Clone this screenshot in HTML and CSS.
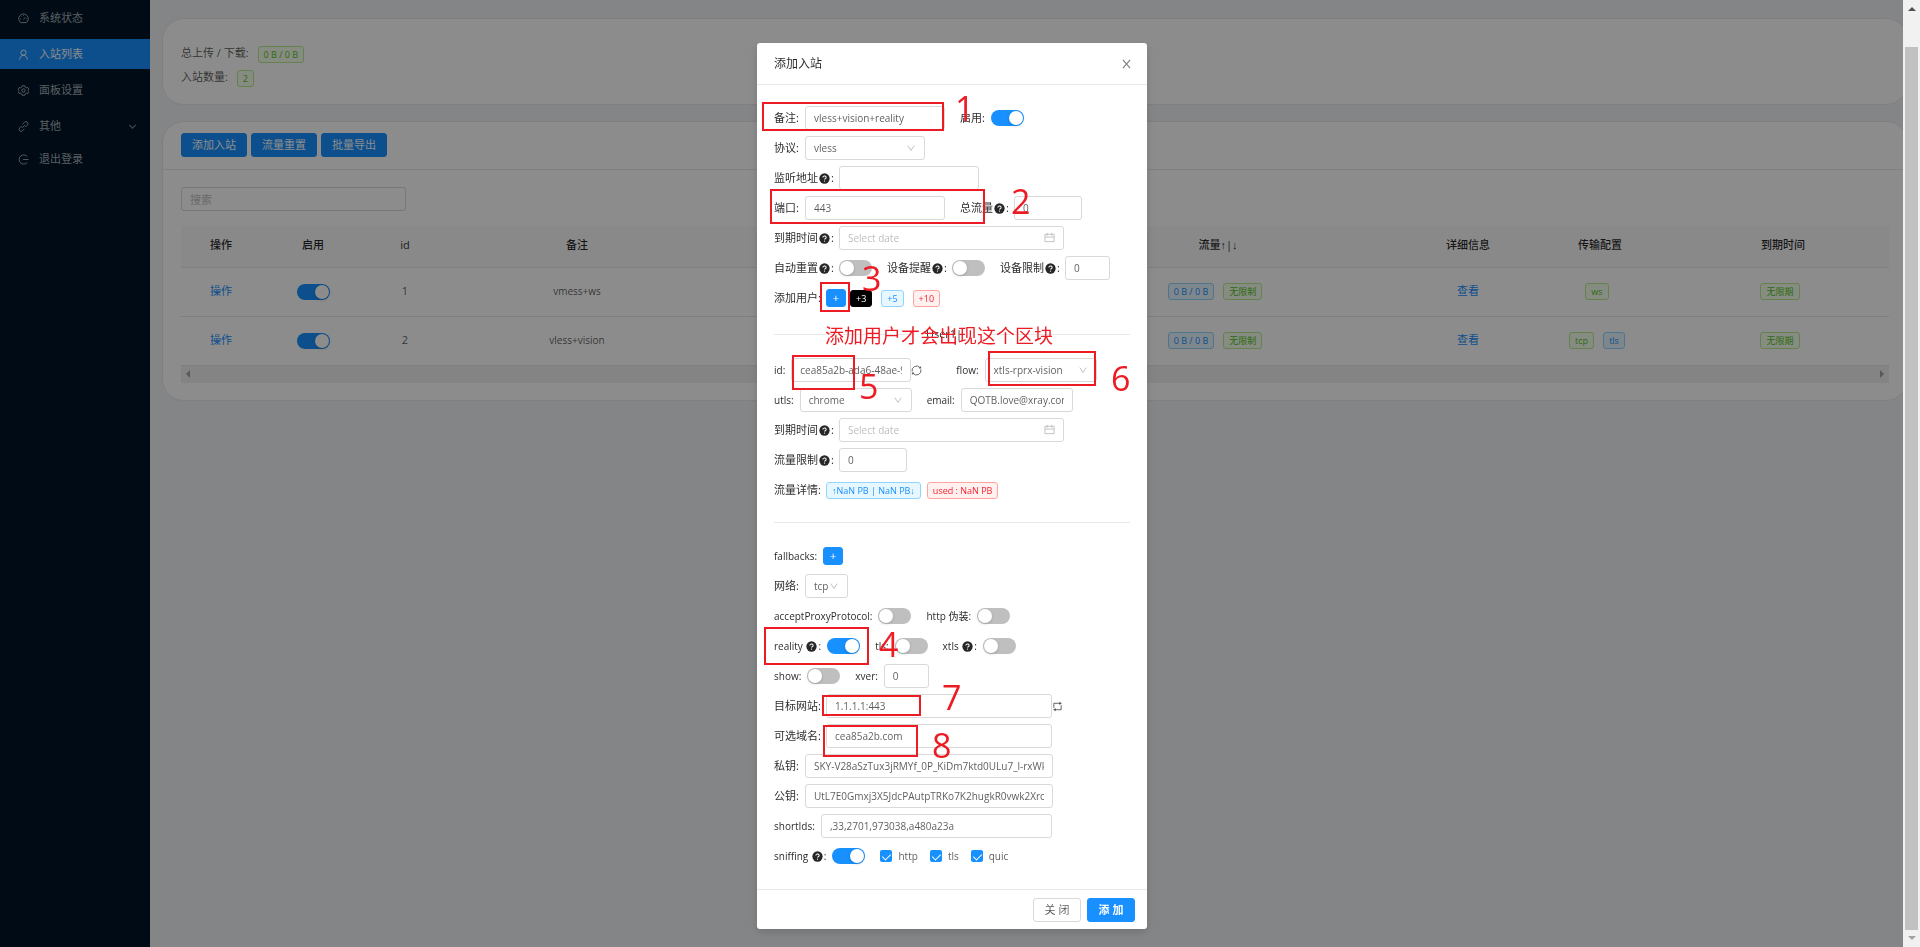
FILE: index.html
```html
<!DOCTYPE html>
<html lang="zh-CN">
<head>
    <meta charset="UTF-8">
    <meta name="viewport" content="width=device-width, initial-scale=1.0">
    <title>入站列表</title>
    <link rel="stylesheet" href="styles.css">
</head>
<body>
    <svg class="sprite" aria-hidden="true">
        <symbol id="i-down" viewBox="0 0 10 10"><path d="M1 2 5 8 9 2" fill="none" stroke="currentColor" stroke-width="1.200"/></symbol>
        <symbol id="i-help" viewBox="0 0 12 12">
            <circle cx="6" cy="6" r="5.6" fill="currentColor"/>
            <path d="M4.2 4.8a1.8 1.6 0 1 1 2.6 1.4Q6 6.5 6 7.2" fill="none" stroke="#fff" stroke-width="1.1"/>
            <circle cx="6" cy="8.8" r=".7" fill="#fff"/>
        </symbol>
        <symbol id="i-calendar" viewBox="0 0 12 12"><path d="M1 2.5h10v8H1zM1 5.5h10M3.5 1v3M8.5 1v3" fill="none" stroke="currentColor"/></symbol>
    </svg>

    <div class="layout">
        <nav class="sidebar">
            <a class="menu-item" href="#">
                <svg viewBox="0 0 12 12"><path d="M3 10.5a5.2 5.2 0 1 1 6 0zM6 7l2-2.4M2.4 6.5h.8M6 2.2v.9M8.8 6.5h.8M3.4 3.6l.6.6"/></svg>系统状态</a>
            <a class="menu-item active" href="#">
                <svg viewBox="0 0 12 12"><circle cx="6" cy="4" r="2.8"/><path d="M1.8 11.5C2 8.6 3.6 7 6 7s4 1.6 4.2 4.5"/></svg>入站列表</a>
            <a class="menu-item" href="#">
                <svg viewBox="0 0 12 12"><circle cx="6" cy="6" r="1.8"/><path d="M4.7.8h2.6l.5 1.5 1.5.8 1.500-.3L12 5 10.900 6 12 7.200l-1.200 2-1.500-.3-1.500.8-.5 1.500H4.700l-.5-1.500-1.500-.8-1.500.3L0 7.200 1.100 6 0 5l1.200-2.200 1.500.3 1.500-.8z"/></svg>面板设置</a>
            <a class="menu-item submenu" href="#">
                <svg viewBox="0 0 12 12"><path d="M5 3.500 7.200 1.300a2 2 0 0 1 3 3L7.800 6.800M7 8.500l-2.200 2.200a2 2 0 0 1-3-3L4.200 5.200M4.500 7.500l3-3"/></svg>其他
                <svg class="menu-arrow" viewBox="0 0 10 10"><path d="M2 3.500 5 6.500 8 3.500"/></svg></a>
            <a class="menu-item" href="#">
                <svg viewBox="0 0 12 12"><path d="M10 9.300A5 5 0 1 1 10 2.700M5.500 6h6"/></svg>退出登录</a>
        </nav>

        <main class="content">
            <section class="card summary">
                <p>总上传 / 下载: <span class="tag green">0 B / 0 B</span></p>
                <p>入站数量: <span class="tag green">2</span></p>
            </section>

            <section class="card">
                <div class="card-head">
                    <button class="btn primary">添加入站</button>
                    <button class="btn primary">流量重置</button>
                    <button class="btn primary">批量导出</button>
                </div>
                <div class="card-body">
                    <input class="input search" type="text" placeholder="搜索" aria-label="搜索">
                    <table class="inbounds">
                        <colgroup>
                            <col class="c-action"><col class="c-enable"><col class="c-id"><col class="c-remark"><col class="c-port">
                            <col class="c-traffic"><col class="c-detail"><col class="c-stream"><col class="c-expiry">
                        </colgroup>
                        <thead>
                            <tr><th>操作</th><th>启用</th><th>id</th><th>备注</th><th></th><th>流量↑|↓</th><th>详细信息</th><th>传输配置</th><th>到期时间</th></tr>
                        </thead>
                        <tbody>
                            <tr>
                                <td><a href="#">操作</a></td>
                                <td><input class="switch" type="checkbox" role="switch" aria-label="启用 1" checked></td>
                                <td>1</td>
                                <td class="en">vmess+ws</td>
                                <td></td>
                                <td><span class="tag blue">0 B / 0 B</span><span class="tag green">无限制</span></td>
                                <td><a href="#">查看</a></td>
                                <td><span class="tag green">ws</span></td>
                                <td><span class="tag green">无限期</span></td>
                            </tr>
                            <tr>
                                <td><a href="#">操作</a></td>
                                <td><input class="switch" type="checkbox" role="switch" aria-label="启用 2" checked></td>
                                <td>2</td>
                                <td class="en">vless+vision</td>
                                <td></td>
                                <td><span class="tag blue">0 B / 0 B</span><span class="tag green">无限制</span></td>
                                <td><a href="#">查看</a></td>
                                <td><span class="tag green">tcp</span><span class="tag blue">tls</span></td>
                                <td><span class="tag green">无限期</span></td>
                            </tr>
                        </tbody>
                    </table>
                    <div class="hscroll"><i class="tri left"></i><i class="tri right"></i></div>
                </div>
            </section>
        </main>
    </div>

    <div class="mask"></div>

    <div class="modal-wrap">
        <form class="modal" role="dialog" aria-labelledby="modal-title">
            <header class="modal-head">
                <h2 id="modal-title">添加入站</h2>
                <button class="close" type="button" aria-label="Close">
                    <svg viewBox="0 0 10 10"><path d="M1 .5 9 9.5M9 .5 1 9.5"/></svg>
                </button>
            </header>

            <div class="modal-body">
                <div class="row">
                    <div class="item"><label class="l2" for="remark">备注:</label><input class="input w140" id="remark" type="text" value="vless+vision+reality"></div>
                    <div class="item"><label class="l2" for="enable">启用:</label><input class="switch" id="enable" type="checkbox" role="switch" checked></div>
                </div>
                <div class="row">
                    <div class="item"><label class="l2" for="protocol">协议:</label><span class="select w120"><select id="protocol"><option>vless</option></select><svg><use href="#i-down"/></svg></span></div>
                </div>
                <div class="row">
                    <div class="item"><label class="l4h" for="listen">监听地址<svg class="help"><use href="#i-help"/></svg>:</label><input class="input w140" id="listen" type="text"></div>
                </div>
                <div class="row">
                    <div class="item"><label class="l2" for="port">端口:</label><input class="input w140" id="port" type="text" value="443"></div>
                    <div class="item"><label class="l3h" for="total">总流量<svg class="help"><use href="#i-help"/></svg>:</label><input class="input w68" id="total" type="text" value="0"></div>
                </div>
                <div class="row">
                    <div class="item"><label class="l4h" for="expiry">到期时间<svg class="help"><use href="#i-help"/></svg>:</label><span class="date"><input class="input" id="expiry" type="text" placeholder="Select date"><svg><use href="#i-calendar"/></svg></span></div>
                </div>
                <div class="row">
                    <div class="item"><label class="l4h" for="reset">自动重置<svg class="help"><use href="#i-help"/></svg>:</label><input class="switch" id="reset" type="checkbox" role="switch"></div>
                    <div class="item"><label class="l4h" for="alert">设备提醒<svg class="help"><use href="#i-help"/></svg>:</label><input class="switch" id="alert" type="checkbox" role="switch"></div>
                    <div class="item"><label class="l4h" for="limit">设备限制<svg class="help"><use href="#i-help"/></svg>:</label><input class="input w45" id="limit" type="text" value="0"></div>
                </div>
                <div class="row">
                    <div class="item add-user"><span class="label l4">添加用户:</span><button class="btn primary plus" type="button">+</button><span class="tag black">+3</span><span class="tag blue">+5</span><span class="tag red">+10</span></div>
                </div>

                <div class="divider titled"><span>User1|</span></div>

                <div class="row">
                    <div class="item"><label class="en" for="uid">id:</label><input class="input w120" id="uid" type="text" value="cea85a2b-ada6-48ae-9d1f-27c4"><svg class="reload" viewBox="0 0 12 12"><path d="M1.200 7.200A5 5 0 0 1 9.800 2.800M10.800 4.800A5 5 0 0 1 2.200 9.200"/><path class="solid" d="M11 1.200v2.600H8.400zM1 10.800V8.200h2.600z"/></svg></div>
                    <div class="item flow"><label class="en" for="flow">flow:</label><span class="select w112"><select id="flow"><option>xtls-rprx-vision</option></select><svg><use href="#i-down"/></svg></span></div>
                </div>
                <div class="row">
                    <div class="item"><label class="en" for="utls">utls:</label><span class="select w112"><select id="utls"><option>chrome</option></select><svg><use href="#i-down"/></svg></span></div>
                    <div class="item"><label class="en" for="email">email:</label><input class="input w112" id="email" type="text" value="QOTB.love@xray.com"></div>
                </div>
                <div class="row">
                    <div class="item"><label class="l4h" for="uexpiry">到期时间<svg class="help"><use href="#i-help"/></svg>:</label><span class="date"><input class="input" id="uexpiry" type="text" placeholder="Select date"><svg><use href="#i-calendar"/></svg></span></div>
                </div>
                <div class="row">
                    <div class="item"><label class="l4h" for="quota">流量限制<svg class="help"><use href="#i-help"/></svg>:</label><input class="input w68" id="quota" type="text" value="0"></div>
                </div>
                <div class="row">
                    <div class="item"><span class="label l4">流量详情:</span><span class="tag blue">↑NaN PB | NaN PB↓</span><span class="tag red">used : NaN PB</span></div>
                </div>

                <div class="divider"></div>

                <div class="row">
                    <div class="item"><span class="label en">fallbacks:</span><button class="btn primary plus" type="button">+</button></div>
                </div>
                <div class="row">
                    <div class="item"><label class="l2" for="network">网络:</label><span class="select narrow"><select id="network"><option>tcp</option></select><svg><use href="#i-down"/></svg></span></div>
                </div>
                <div class="row">
                    <div class="item"><label class="en" for="proxy">acceptProxyProtocol:</label><input class="switch" id="proxy" type="checkbox" role="switch"></div>
                    <div class="item"><label class="en" for="fake">http 伪装:</label><input class="switch" id="fake" type="checkbox" role="switch"></div>
                </div>
                <div class="row">
                    <div class="item"><label class="en" for="reality">reality <svg class="help"><use href="#i-help"/></svg>:</label><input class="switch" id="reality" type="checkbox" role="switch" checked></div>
                    <div class="item"><label class="en" for="tls">tls:</label><input class="switch" id="tls" type="checkbox" role="switch"></div>
                    <div class="item"><label class="en" for="xtls">xtls <svg class="help"><use href="#i-help"/></svg>:</label><input class="switch" id="xtls" type="checkbox" role="switch"></div>
                </div>
                <div class="row">
                    <div class="item"><label class="en" for="show">show:</label><input class="switch" id="show" type="checkbox" role="switch"></div>
                    <div class="item"><label class="en" for="xver">xver:</label><input class="input w45" id="xver" type="text" value="0"></div>
                </div>
                <div class="row">
                    <div class="item"><label class="l4" for="dest">目标网站:</label><input class="input w226" id="dest" type="text" value="1.1.1.1:443"><svg class="retweet" viewBox="0 0 12 12"><path d="M2 7.500V2.500h6.500M10 4.500v5H3.500"/><path class="solid" d="M8 .7 10.800 2.500 8 4.300zM4 7.700 1.200 9.500 4 11.300z"/></svg></div>
                </div>
                <div class="row">
                    <div class="item"><label class="l4" for="names">可选域名:</label><input class="input w226" id="names" type="text" value="cea85a2b.com"></div>
                </div>
                <div class="row">
                    <div class="item"><label class="l2" for="private">私钥:</label><input class="input w248" id="private" type="text" value="SKY-V28aSzTux3jRMYf_0P_KiDm7ktd0ULu7_l-rxWk"></div>
                </div>
                <div class="row">
                    <div class="item"><label class="l2" for="public">公钥:</label><input class="input w248" id="public" type="text" value="UtL7E0Gmxj3X5JdcPAutpTRKo7K2hugkR0vwk2Xrcw"></div>
                </div>
                <div class="row">
                    <div class="item"><label class="en" for="short">shortIds:</label><input class="input w231" id="short" type="text" value=",33,2701,973038,a480a23a"></div>
                </div>
                <div class="row">
                    <div class="item"><label class="en" for="sniffing">sniffing <svg class="help"><use href="#i-help"/></svg>:</label><input class="switch" id="sniffing" type="checkbox" role="switch" checked></div>
                    <div class="item checks">
                        <label><input class="check" type="checkbox" checked>http</label>
                        <label><input class="check" type="checkbox" checked>tls</label>
                        <label><input class="check" type="checkbox" checked>quic</label>
                    </div>
                </div>
            </div>

            <footer class="modal-foot">
                <button class="btn" type="button">关 闭</button>
                <button class="btn primary strong" type="button">添 加</button>
            </footer>

            <!-- numbered steps drawn over the form -->
            <div class="steps">
                <i class="box box1"></i><b class="num num1">1</b>
                <i class="box box2"></i><b class="num num2">2</b>
                <i class="box box3"></i><b class="num num3">3</b>
                <i class="box box4"></i><b class="num num4">4</b>
                <i class="box box5"></i><b class="num num5">5</b>
                <i class="box box6"></i><b class="num num6">6</b>
                <i class="box box7"></i><b class="num num7">7</b>
                <i class="box box8"></i><b class="num num8">8</b>
                <b class="note">添加用户才会出现这个区块</b>
            </div>
        </form>
    </div>

    <div class="vscroll"><i class="tri up"></i><i class="thumb"></i><i class="tri down"></i></div>
</body>
</html>
```
FILE: styles.css
```css
* {
    box-sizing: border-box;
}

body {
    margin: 0;
    background: #f0f2f5;
    color: rgba(0, 0, 0, 0.65);
    font: 11px/18px "Open Sans", "Liberation Sans", "Noto Sans CJK SC", sans-serif;
    overflow: hidden;
}

button, input, select {
    font: inherit;
    color: inherit;
}

a {
    color: #1890ff;
    text-decoration: none;
}

svg {
    fill: none;
    stroke: currentColor;
    flex: none;
}

.sprite {
    display: none;
}

.solid {
    fill: currentColor;
    stroke: none;
}

.en {
    font-size: 10px;
}

/* page */
.layout {
    display: flex;
    min-height: 100vh;
}

.sidebar {
    width: 150px;
    flex: none;
    padding-top: 3px;
    background: #001529;
}

.menu-item {
    display: flex;
    align-items: center;
    height: 30px;
    margin-bottom: 6px;
    padding: 0 12px 0 18px;
    color: rgba(255, 255, 255, 0.65);
}

.menu-item svg {
    width: 11px;
    height: 11px;
    margin-right: 10px;
}

.menu-item.active {
    background: #1890ff;
    color: #fff;
}

.menu-item.submenu {
    margin-bottom: 3px;
}

.menu-item .menu-arrow {
    margin: 0 0 0 auto;
    opacity: 0.7;
}

.content {
    flex: 1;
    min-width: 0;
    padding: 18px 12px;
}

.card {
    margin-bottom: 16px;
    background: #fff;
    border: 1px solid #e8e8e8;
    border-radius: 22px;
    overflow: hidden;
}

.summary {
    padding: 22px 18px 15px;
}

.summary p {
    margin: 0;
    height: 24px;
    line-height: 24px;
}

.summary .tag {
    margin-left: 6px;
}

.card-head {
    display: flex;
    gap: 4px;
    padding: 11px 18px 12px;
    border-bottom: 1px solid #e8e8e8;
}

.card-body {
    padding: 17px 18px;
}

.search {
    width: 225px;
    margin-bottom: 15px;
}

.inbounds {
    width: 100%;
    table-layout: fixed;
    border-collapse: collapse;
    text-align: center;
}

/* shares of the table width */
.c-action { width: 80px; }
.c-enable { width: 104px; }
.c-id { width: 80px; }
.c-remark { width: 264px; }
.c-port { width: 314px; }
.c-traffic { width: 390px; }
.c-detail { width: 110px; }
.c-stream { width: 154px; }
.c-expiry { width: 212px; }

.inbounds th {
    height: 41px;
    padding: 0 0 2px;
    background: #fafafa;
    border-bottom: 1px solid #e8e8e8;
    color: rgba(0, 0, 0, 0.85);
    font-weight: 500;
}

.inbounds td {
    height: 49px;
    padding: 0 0 2px;
    border-bottom: 1px solid #e8e8e8;
}

.inbounds .tag {
    margin-right: 6px;
}

.inbounds .tag + .tag {
    margin-left: 3px;
}

.hscroll {
    display: flex;
    justify-content: space-between;
    align-items: center;
    height: 17px;
    padding: 0 5px;
    background: #f1f1f1;
}

.mask {
    position: fixed;
    inset: 0;
    background: rgba(0, 0, 0, 0.45);
}

/* scrollbar */
.vscroll {
    position: fixed;
    top: 0;
    right: 0;
    bottom: 0;
    width: 17px;
    display: flex;
    flex-direction: column;
    align-items: center;
    padding: 7px 0;
    background: #f1f1f1;
}

.thumb {
    flex: 1;
    width: 13px;
    margin: 36px 0 6px;
    background: #c1c1c1;
}

.tri {
    border: 4px solid transparent;
}

.tri.up {
    border-top: 0;
    border-bottom-color: #505050;
}

.tri.down {
    border-bottom: 0;
    border-top-color: #a3a3a3;
}

.tri.left {
    border-left: 0;
    border-right-color: #a3a3a3;
}

.tri.right {
    border-right: 0;
    border-left-color: #a3a3a3;
}

/* controls */
.btn {
    height: 24px;
    padding: 0 10px;
    background: #fff;
    border: 1px solid #d9d9d9;
    border-radius: 3px;
    line-height: 20px;
    white-space: nowrap;
}

.btn.primary {
    background: #1890ff;
    border-color: #1890ff;
    color: #fff;
}

.btn.strong {
    font-weight: 700;
}

.btn.plus {
    width: 20px;
    height: 18px;
    padding: 0;
    line-height: 14px;
}

.tag {
    display: inline-block;
    height: 17px;
    padding: 0 5px;
    border: 1px solid;
    border-radius: 3px;
    font-size: 9px;
    line-height: 15px;
    vertical-align: middle;
    white-space: nowrap;
}

.tag.green {
    background: #f6ffed;
    border-color: #b7eb8f;
    color: #52c41a;
}

.tag.blue {
    background: #e6f7ff;
    border-color: #91d5ff;
    color: #1890ff;
}

.tag.red {
    background: #fff1f0;
    border-color: #ffa39e;
    color: #f5222d;
}

.tag.black {
    background: #000;
    border-color: #000;
    color: #fff;
}

.input, .select {
    height: 24px;
    background: #fff;
    border: 1px solid #d9d9d9;
    border-radius: 3px;
    font-size: 10px;
}

.input {
    display: block;
    padding: 0 8px;
    outline: none;
}

.input.search {
    font-size: 11px;
}

.input::placeholder {
    color: #bfbfbf;
}

.select {
    position: relative;
    display: block;
}

.select select {
    display: block;
    width: 100%;
    height: 22px;
    padding: 0 8px;
    background: none;
    border: 0;
    outline: none;
    appearance: none;
}

.select svg {
    position: absolute;
    top: 7px;
    right: 9px;
    width: 8px;
    height: 8px;
    color: #bfbfbf;
    pointer-events: none;
}

.date {
    position: relative;
}

.date .input {
    width: 225px;
}

.date svg {
    position: absolute;
    top: 6px;
    right: 9px;
    width: 11px;
    height: 11px;
    color: #bfbfbf;
}

.switch {
    appearance: none;
    display: inline-block;
    width: 33px;
    height: 16px;
    margin: 0;
    padding: 1px;
    background: #bfbfbf;
    border-radius: 8px;
    vertical-align: middle;
}

.switch::before {
    content: "";
    display: block;
    width: 14px;
    height: 14px;
    background: #fff;
    border-radius: 50%;
    box-shadow: 0 1px 3px rgba(0, 35, 11, 0.2);
}

.switch:checked {
    background: #1890ff;
}

.switch:checked::before {
    margin-left: auto;
}

.check {
    appearance: none;
    width: 12px;
    height: 12px;
    margin: 0 6px 0 0;
    background: #1890ff;
    border-radius: 2px;
}

.check::before {
    content: "";
    display: block;
    width: 4px;
    height: 7px;
    margin: 2px 0 0 4px;
    border: solid #fff;
    border-width: 0 1px 1px 0;
    transform: rotate(45deg);
}

/* modal */
.modal-wrap {
    position: fixed;
    inset: 0;
    display: flex;
    justify-content: center;
    align-items: flex-start;
    padding-top: 43px;
    padding-right: 16px;
}

.modal {
    position: relative;
    width: 390px;
    background: #fff;
    border-radius: 3px;
    box-shadow: 0 3px 9px rgba(0, 0, 0, 0.15);
}

.modal-head {
    display: flex;
    align-items: center;
    justify-content: space-between;
    height: 42px;
    padding: 0 16px 0 17px;
    border-bottom: 1px solid #e8e8e8;
}

.modal-head h2 {
    margin: 0;
    color: rgba(0, 0, 0, 0.85);
    font-size: 12px;
    font-weight: 400;
}

.close {
    width: 9px;
    height: 10px;
    padding: 0;
    border: 0;
    background: none;
    color: rgba(0, 0, 0, 0.5);
}

.close svg {
    display: block;
    width: 9px;
    height: 10px;
    stroke-width: 1.3;
}

.modal-body {
    padding: 18px 17px;
}

.row {
    display: flex;
    gap: 15px;
    height: 30px;
}

.item {
    display: flex;
    align-items: center;
}

.item > label, .label {
    display: flex;
    align-items: center;
    padding-right: 6px;
    color: rgba(0, 0, 0, 0.85);
    white-space: pre;
}

.l2 { width: 31px; }
.l4 { width: 52px; }
.l3h { width: 54px; }
.l4h { width: 65px; }

.w45 { width: 45px; }
.w68 { width: 68px; }
.w112 { width: 112px; }
.w120 { width: 120px; }
.w140 { width: 140px; }
.w226 { width: 226px; }
.w231 { width: 231px; }
.w248 { width: 248px; }

.help {
    width: 11px;
    height: 11px;
    margin: 0 1px;
    stroke: none;
}

.item .tag {
    margin-right: 6px;
}

.item.add-user .tag {
    margin-right: 9px;
}

.item .plus {
    margin-right: 4px;
}

.select.narrow {
    width: 43px;
}

.reload, .retweet {
    width: 11px;
    height: 11px;
}

.item.flow {
    margin-left: 19px;
}

.item.checks {
    gap: 12px;
    font-size: 10px;
}

.item.checks label {
    padding: 0;
    color: rgba(0, 0, 0, 0.65);
}

.divider {
    height: 36px;
    padding-top: 17px;
}

.divider::before {
    content: "";
    display: block;
    border-top: 1px solid #e8e8e8;
}

.divider.titled {
    display: flex;
    align-items: center;
    gap: 12px;
    height: 42px;
    padding: 0;
    color: rgba(0, 0, 0, 0.85);
    font-weight: 500;
}

.divider.titled span {
    padding-right: 16px;
}

.divider.titled::before, .divider.titled::after {
    content: "";
    flex: 1;
    border-top: 1px solid #e8e8e8;
}

.modal-foot {
    display: flex;
    justify-content: flex-end;
    gap: 6px;
    padding: 8px 12px 7px;
    border-top: 1px solid #e8e8e8;
}

.modal-foot .btn {
    min-width: 48px;
}

/* step markers, placed freely over the form */
.box {
    position: absolute;
    border: 2px solid #ed1c24;
}

.num, .note {
    position: absolute;
    color: #ed1c24;
    font-weight: 400;
    white-space: nowrap;
}

.num {
    font-size: 34px;
    line-height: 34px;
}

.note {
    left: 68px;
    top: 279px;
    font-size: 19px;
    line-height: 28px;
}

.box1 { left: 5px; top: 59px; width: 182px; height: 29px; }
.box2 { left: 13px; top: 146px; width: 215px; height: 35px; }
.box3 { left: 63px; top: 239px; width: 30px; height: 30px; }
.box4 { left: 7px; top: 584px; width: 105px; height: 38px; }
.box5 { left: 35px; top: 312px; width: 63px; height: 35px; }
.box6 { left: 231px; top: 308px; width: 108px; height: 35px; }
.box7 { left: 65px; top: 652px; width: 99px; height: 21px; }
.box8 { left: 66px; top: 682px; width: 95px; height: 32px; }

.num1 { left: 198px; top: 48px; }
.num2 { left: 254px; top: 141px; }
.num3 { left: 105px; top: 218px; }
.num4 { left: 122px; top: 584px; }
.num5 { left: 102px; top: 326px; }
.num6 { left: 354px; top: 318px; }
.num7 { left: 185px; top: 637px; }
.num8 { left: 175px; top: 685px; }
```
